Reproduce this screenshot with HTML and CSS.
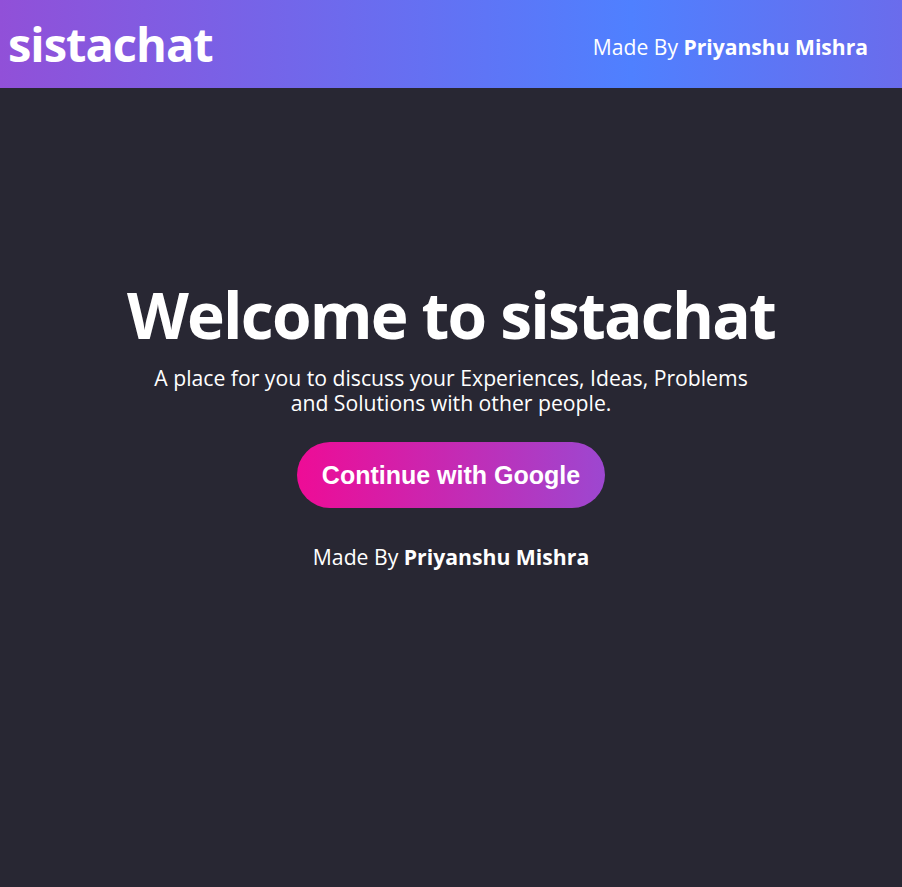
FILE: index.html
```html
<!DOCTYPE html>
<html lang="en">
<head>
<meta charset="utf-8">
<title>sistachat</title>
<link rel="stylesheet" href="styles.css">
</head>
<body>
<header class="topbar">
  <div class="logo">sistachat</div>
  <div class="credit">Made By <b>Priyanshu Mishra</b></div>
</header>
<main class="hero">
  <h1 class="title">Welcome to sistachat</h1>
  <p class="subtitle">A place for you to discuss your Experiences, Ideas, Problems and Solutions with other people.</p>
  <button class="google-btn">Continue with Google</button>
  <p class="made">Made By <b>Priyanshu Mishra</b></p>
</main>
</body>
</html>
```
FILE: styles.css
```css
html, body {
  margin: 0;
  padding: 0;
}
body {
  background: #282733;
  color: #ffffff;
  font-family: "Open Sans", "Noto Sans", sans-serif;
  min-height: 887px;
}
.topbar {
  height: 88px;
  display: flex;
  align-items: center;
  justify-content: space-between;
  padding: 0 34px 0 8px;
  background: linear-gradient(to right, #9150d8 0%, #4f80ff 70%, #6a6cec 100%);
}
.logo {
  font-size: 47px;
  font-weight: 700;
  letter-spacing: -1px;
  line-height: 60px;
}
.credit {
  font-size: 21.1px;
  line-height: 28px;
  padding-top: 6px;
}
.credit b {
  font-weight: 700;
}
.hero {
  display: flex;
  flex-direction: column;
  align-items: center;
  text-align: center;
  padding-top: 187px;
}
.title {
  margin: 0;
  font-size: 64px;
  font-weight: 700;
  line-height: 80px;
  letter-spacing: -1.8px;
}
.subtitle {
  margin: 10px 0 0;
  max-width: 615px;
  font-size: 21.2px;
  line-height: 25px;
}
.google-btn {
  margin-top: 27px;
  width: 308px;
  height: 66px;
  border: none;
  border-radius: 33px;
  background: linear-gradient(to right, #ee0c96, #9d47d0);
  color: #ffffff;
  font-family: "Liberation Sans", Arial, sans-serif;
  font-weight: 700;
  font-size: 25px;
  cursor: pointer;
}
.made {
  margin: 36px 0 0;
  font-size: 21.2px;
  line-height: 25px;
}
```
